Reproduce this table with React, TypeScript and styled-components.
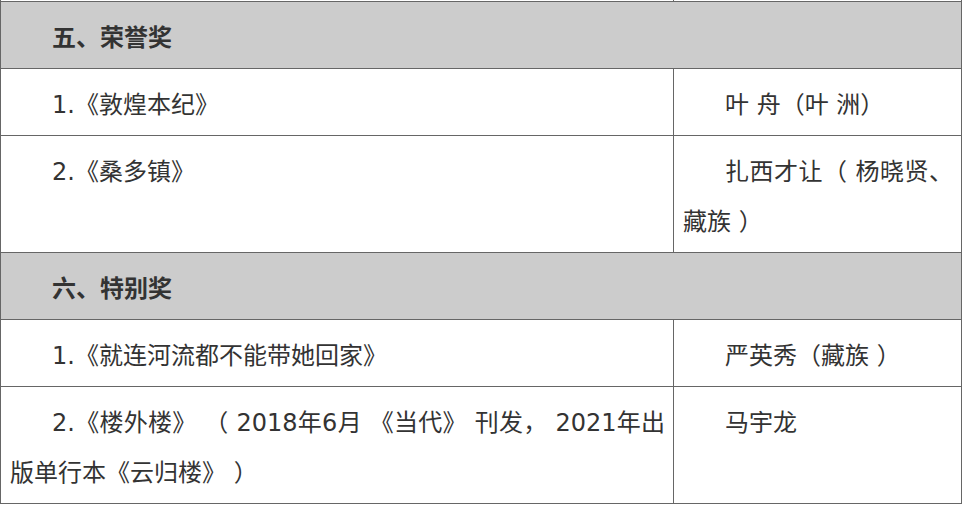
import React from 'react';
import styled, { createGlobalStyle } from 'styled-components';

const GlobalStyle = createGlobalStyle`
  html, body {
    margin: 0;
    padding: 0;
    background: #fff;
  }
  body {
    font-family: "DejaVu Sans", "Noto Sans CJK SC", sans-serif;
    color: #333;
  }
`;

const Viewport = styled.div`
  width: 964px;
  height: 506px;
  overflow: hidden;
`;

const Table = styled.table`
  width: 962px;
  border-collapse: collapse;
  table-layout: fixed;
  margin-top: -20px;
`;

const Row = styled.tr<{ $head?: boolean }>`
  background: ${p => (p.$head ? '#cccccc' : '#ffffff')};
`;

const Cell = styled.td<{ $bold?: boolean }>`
  border: 1px solid #666;
  padding: 11px 8px 5px 9px;
  vertical-align: top;
  font-size: 24px;
  font-weight: ${p => (p.$bold ? 700 : 400)};
  line-height: 50px;
  text-align: justify;
  text-indent: 42px;
  color: #333;
`;

const Spacer = styled.td`
  border: 1px solid #666;
  height: 20px;
  padding: 0;
`;

type Entry = { title: string; author: string };

const sections: { heading: string; entries: Entry[] }[] = [
  {
    heading: '五、荣誉奖',
    entries: [
      { title: '1.《敦煌本纪》', author: '叶 舟（叶 洲）' },
      { title: '2.《桑多镇》', author: '扎西才让（ 杨晓贤、藏族 ）' },
    ],
  },
  {
    heading: '六、特别奖',
    entries: [
      { title: '1.《就连河流都不能带她回家》', author: '严英秀（藏族 ）' },
      {
        title: '2.《楼外楼》 （ 2018年6月 《当代》 刊发， 2021年出版单行本《云归楼》 ）',
        author: '马宇龙',
      },
    ],
  },
];

export default function App() {
  return (
    <Viewport>
      <GlobalStyle />
      <Table>
        <colgroup>
          <col style={{ width: 673 }} />
          <col />
        </colgroup>
        <tbody>
          <tr>
            <Spacer />
            <Spacer />
          </tr>
          {sections.map(s => (
            <React.Fragment key={s.heading}>
              <Row $head>
                <Cell colSpan={2} $bold>
                  {s.heading}
                </Cell>
              </Row>
              {s.entries.map(e => (
                <Row key={e.title}>
                  <Cell>{e.title}</Cell>
                  <Cell>{e.author}</Cell>
                </Row>
              ))}
            </React.Fragment>
          ))}
        </tbody>
      </Table>
    </Viewport>
  );
}
